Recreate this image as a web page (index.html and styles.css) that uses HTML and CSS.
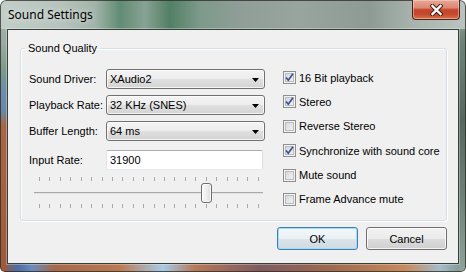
FILE: index.html
```html
<!DOCTYPE html>
<html>
<head>
<meta charset="utf-8">
<link rel="stylesheet" href="styles.css">
</head>
<body>
<div class="window">
  <div class="titlebar">
    <span class="title">Sound Settings</span>
    <button class="close" aria-label="Close">
      <svg width="13" height="12" viewBox="0 0 13 12"><path d="M2.5 2 L10.5 10 M10.5 2 L2.5 10" stroke="#4a1d12" stroke-width="4.4" stroke-linecap="square" fill="none"/><path d="M2.5 2 L10.5 10 M10.5 2 L2.5 10" stroke="#ffffff" stroke-width="2.4" stroke-linecap="square" fill="none"/></svg>
    </button>
  </div>
  <div class="client">
    <fieldset class="group">
      <legend>Sound Quality</legend>
      <div class="group-body">
        <div class="left">
          <div class="row"><label>Sound Driver:</label><div class="combo"><span>XAudio2</span><svg width="7" height="4" viewBox="0 0 7 4"><path d="M0 0h7L3.5 4z" fill="#000"/></svg></div></div>
          <div class="row"><label>Playback Rate:</label><div class="combo"><span>32 KHz (SNES)</span><svg width="7" height="4" viewBox="0 0 7 4"><path d="M0 0h7L3.5 4z" fill="#000"/></svg></div></div>
          <div class="row"><label>Buffer Length:</label><div class="combo"><span>64 ms</span><svg width="7" height="4" viewBox="0 0 7 4"><path d="M0 0h7L3.5 4z" fill="#000"/></svg></div></div>
          <div class="row input-row"><label>Input Rate:</label><div class="textbox">31900</div></div>
          <div class="slider">
            <div class="ticks"><i></i><i></i><i></i><i></i><i></i><i></i><i></i><i></i><i></i><i></i><i></i><i></i><i></i><i></i><i></i><i></i><i></i><i></i><i></i><i></i><i></i><i></i></div>
            <div class="track-area">
              <div class="track"></div>
              <div class="thumb" style="left:167px"></div>
            </div>
            <div class="ticks bottom"><i></i><i></i><i></i><i></i><i></i><i></i><i></i><i></i><i></i><i></i><i></i><i></i><i></i><i></i><i></i><i></i><i></i><i></i><i></i><i></i><i></i><i></i></div>
          </div>
        </div>
        <div class="checks">
          <div class="check"><span class="box"><svg width="11" height="11" viewBox="0 0 11 11"><path d="M2 5.5 L4.3 8.2 L9 1.8" stroke="#3b4f94" stroke-width="1.7" fill="none"/></svg></span><span>16 Bit playback</span></div>
          <div class="check"><span class="box"><svg width="11" height="11" viewBox="0 0 11 11"><path d="M2 5.5 L4.3 8.2 L9 1.8" stroke="#3b4f94" stroke-width="1.7" fill="none"/></svg></span><span>Stereo</span></div>
          <div class="check"><span class="box"></span><span>Reverse Stereo</span></div>
          <div class="check"><span class="box"><svg width="11" height="11" viewBox="0 0 11 11"><path d="M2 5.5 L4.3 8.2 L9 1.8" stroke="#3b4f94" stroke-width="1.7" fill="none"/></svg></span><span>Synchronize with sound core</span></div>
          <div class="check"><span class="box"></span><span>Mute sound</span></div>
          <div class="check"><span class="box"></span><span>Frame Advance mute</span></div>
        </div>
      </div>
    </fieldset>
    <div class="buttons">
      <button class="btn default">OK</button>
      <button class="btn">Cancel</button>
    </div>
  </div>
</div>
</body>
</html>
```

FILE: styles.css
```css
html, body {
  margin: 0;
  padding: 0;
  background: #ffffff;
}

body {
  font-family: "Liberation Sans", Arial, sans-serif;
  font-size: 11px;
  color: #000;
}

.window {
  width: 466px;
  height: 272px;
  box-sizing: border-box;
  display: flex;
  flex-direction: column;
  border-radius: 6px 6px 5px 5px;
  overflow: hidden;
  background-color: #8d6b55;
  background-image:
    linear-gradient(90deg, #c3cec9 0, #b6c4bd 60px, #a2b4aa 95px, #628c74 120px, #87a293 145px, #527f64 170px, #7d9a8a 200px, #8f9e97 240px, #98a59f 300px, #8e9b94 370px, #a9b4af 415px, #b9c3bf 466px),
    linear-gradient(180deg, #a8b7b0 0, #98aaa1 45px, #7b9a8b 70px, #6d8dab 92px, #6887a6 112px, #a86648 125px, #a3613f 200px, #9b5a3d 272px),
    linear-gradient(180deg, #aab6b1 0, #6d8478 40px, #53695d 120px, #6f8379 200px, #8fa39a 272px),
    linear-gradient(90deg, #9b5a3d 0, #4f6da6 18px, #6a8cbb 32px, #a5684a 55px, #b97b53 120px, #a7cbe8 163px, #b4795a 195px, #7f5b60 260px, #9c6a50 330px, #c68a5c 405px, #a5bccb 440px, #7c8f87 466px);
  background-size: 100% 29px, 7px 100%, 7px 100%, 100% 8px;
  background-position: 0 0, 0 0, 100% 0, 0 100%;
  background-repeat: no-repeat;
  box-shadow: inset 0 0 0 1px rgba(45, 40, 35, 0.75);
}

.titlebar {
  height: 29px;
  flex: none;
  display: flex;
  align-items: flex-start;
}

.title {
  font-family: "Noto Sans", "Open Sans", sans-serif;
  font-size: 12px;
  line-height: 16px;
  margin: 7px 0 0 8px;
  color: #000;
  text-shadow: 0 0 6px rgba(255, 255, 255, 0.8);
}

.close {
  margin-left: auto;
  margin-right: 6px;
  width: 48px;
  height: 20px;
  padding: 0;
  border: 1px solid #4e2419;
  border-top: none;
  border-radius: 0 0 4px 4px;
  background: linear-gradient(180deg, #e9a797 0, #da8a74 40%, #c7432a 52%, #c24a2e 75%, #d9724d 100%);
  box-shadow: inset 0 0 0 1px rgba(255, 225, 215, 0.45);
  display: flex;
  align-items: center;
  justify-content: center;
}

.close svg {
  display: block;
}

.client {
  flex: 1;
  margin: 0 7px 8px 7px;
  border: 1px solid #36413b;
  background: #f0f0f0;
  display: flex;
  flex-direction: column;
  box-shadow: 0 0 0 1px rgba(255, 255, 255, 0.3);
}

.group {
  margin: 12px 11px 0 12px;
  padding: 0;
  border: 1px solid #d5dfe5;
  border-radius: 3px;
  box-shadow: 1px 1px 0 #ffffff, inset 1px 1px 0 #ffffff;
  min-width: 0;
}

.group legend {
  margin-left: 4px;
  padding: 0 3px;
  line-height: 13px;
  font-size: 11px;
}

.group-body {
  display: flex;
  align-items: flex-start;
  gap: 18px;
  padding: 14px 0 12px 8px;
}

.left {
  width: 236px;
  display: flex;
  flex-direction: column;
}

.row {
  display: flex;
  align-items: center;
  height: 20px;
  margin-bottom: 6px;
}

.row label {
  width: 77px;
  flex: none;
}

.combo {
  width: 159px;
  height: 20px;
  box-sizing: border-box;
  border: 1px solid #707070;
  border-radius: 3px;
  background: linear-gradient(180deg, #f4f4f4 0, #ececec 50%, #e0e0e0 50%, #d3d3d3 100%);
  box-shadow: inset 0 0 0 1px rgba(255, 255, 255, 0.75);
  display: flex;
  align-items: center;
  justify-content: space-between;
  padding: 0 5px 0 3px;
}

.combo svg {
  display: block;
  margin-top: 1px;
}

.input-row {
  margin-top: 3px;
  margin-bottom: 7px;
}

.textbox {
  width: 157px;
  height: 20px;
  box-sizing: border-box;
  border: 1px solid;
  border-color: #abadb3 #dbdfe6 #e3e9ef #e2e3ea;
  border-radius: 2px;
  background: #ffffff;
  display: flex;
  align-items: center;
  padding-left: 3px;
}

.slider {
  margin-left: 5px;
  width: 229px;
  display: flex;
  flex-direction: column;
}

.ticks {
  height: 4px;
  display: flex;
  justify-content: space-between;
  padding: 0 4px 0 5px;
}

.ticks i {
  width: 1px;
  height: 4px;
  background: #a8a8a8;
}

.ticks.bottom {
  margin-top: 1px;
}

.track-area {
  position: relative;
  height: 20px;
  margin-top: 2px;
}

.track {
  margin-top: 9px;
  height: 1px;
  background: #a9a9a9;
  border-bottom: 1px solid #e2e2e2;
}

.thumb {
  position: absolute;
  top: 0;
  width: 11px;
  height: 20px;
  box-sizing: border-box;
  border: 1px solid #6f6f6f;
  border-radius: 3px;
  background: linear-gradient(90deg, #fbfbfb 0, #ececec 60%, #dcdcdc 100%);
  box-shadow: inset 0 0 0 1px rgba(255, 255, 255, 0.8);
}

.checks {
  display: flex;
  flex-direction: column;
  gap: 11.4px;
  margin-top: 2px;
}

.check {
  display: flex;
  align-items: center;
  height: 13px;
  gap: 3px;
  white-space: nowrap;
}

.box {
  width: 13px;
  height: 13px;
  box-sizing: border-box;
  flex: none;
  border: 1px solid #8e8f8f;
  background: linear-gradient(135deg, #cdd1d6 0, #e6e7e9 55%, #f8f8f8 100%);
  box-shadow: inset 0 0 0 1px #f4f4f4, inset 0 0 0 2px #b8bcc1;
  display: flex;
  align-items: center;
  justify-content: center;
}

.box svg {
  display: block;
}

.buttons {
  display: flex;
  justify-content: flex-end;
  gap: 8px;
  margin: 6px 11px 0 0;
}

.btn {
  width: 81px;
  height: 23px;
  padding: 0;
  box-sizing: border-box;
  border: 1px solid #707070;
  border-radius: 3px;
  background: linear-gradient(180deg, #f2f2f2 0, #ebebeb 50%, #dddddd 50%, #cfcfcf 100%);
  box-shadow: inset 0 0 0 1px rgba(255, 255, 255, 0.75);
  font-family: "Liberation Sans", Arial, sans-serif;
  font-size: 11px;
  color: #000;
}

.btn.default {
  border-color: #3c7fb1;
  background: linear-gradient(180deg, #f3f8fb 0, #eaf1f6 50%, #dbe4ea 50%, #d0dae1 100%);
  box-shadow: inset 0 0 0 1px #a9dbf6;
}
```
